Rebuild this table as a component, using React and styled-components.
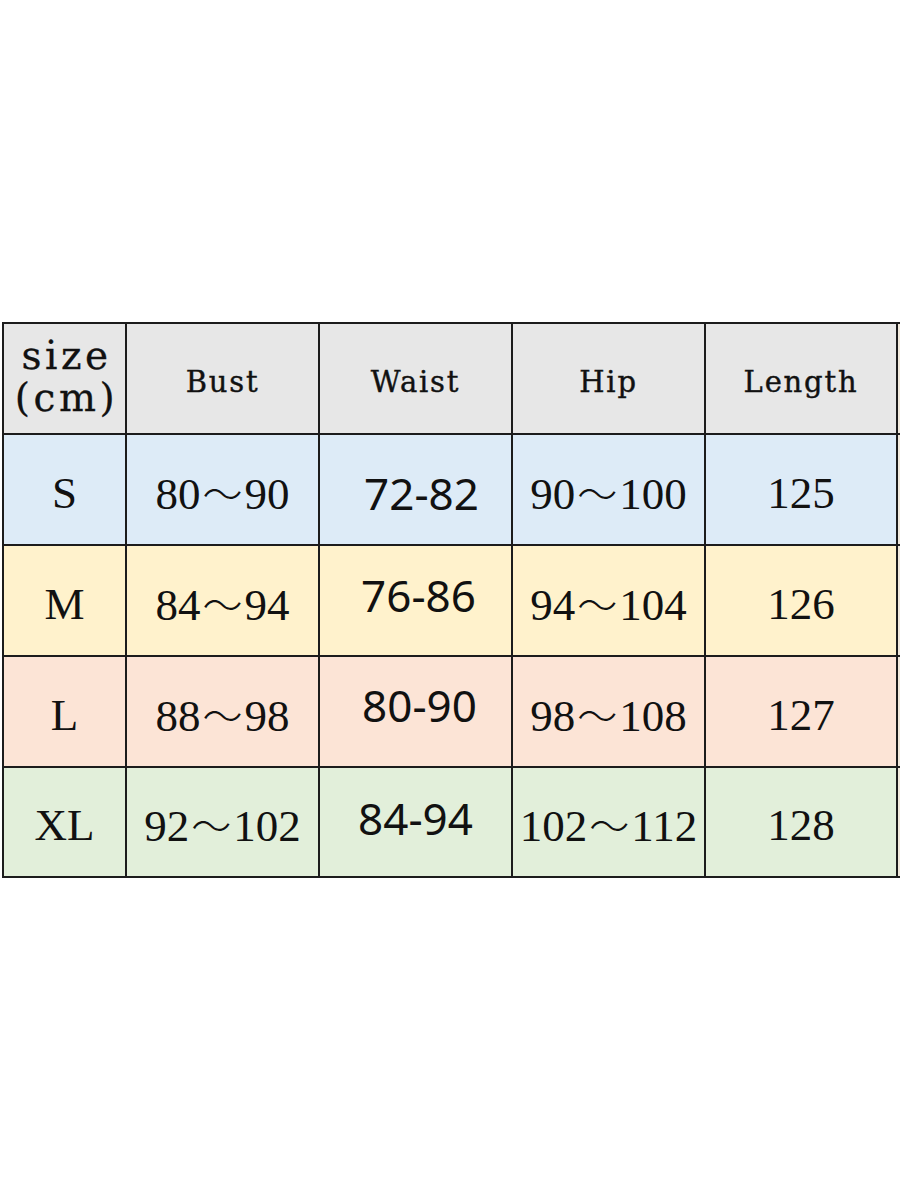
import styled, { createGlobalStyle } from "styled-components";

const GlobalStyle = createGlobalStyle`
  html, body {
    margin: 0;
    padding: 0;
    background: #ffffff;
    overflow: hidden;
  }
`;

const ROW_COLORS = {
  head: "#e7e7e7",
  S: "#ddebf7",
  M: "#fff2cc",
  L: "#fce4d6",
  XL: "#e2efda",
};

const ROWS = [
  { size: "S", bust: ["80", "90"], waist: "72-82", hip: ["90", "100"], length: "125", shift: [6, 3] },
  { size: "M", bust: ["84", "94"], waist: "76-86", hip: ["94", "104"], length: "126", shift: [3, -6] },
  { size: "L", bust: ["88", "98"], waist: "80-90", hip: ["98", "108"], length: "127", shift: [4, -7] },
  { size: "XL", bust: ["92", "102"], waist: "84-94", hip: ["102", "112"], length: "128", shift: [0, -4] },
];

const Page = styled.div`
  width: 900px;
  height: 1200px;
  padding-top: 322px;
  padding-left: 2px;
  box-sizing: border-box;
`;

const Table = styled.div`
  display: grid;
  grid-template-columns: 121px 191px 191px 191px 190px 2px;
  grid-template-rows: 109px 109px 109px 109px 108px;
  gap: 2px;
  padding: 2px;
  width: max-content;
  background: #1c1c1c;
`;

const Cell = styled.div`
  display: flex;
  align-items: center;
  justify-content: center;
  background: ${({ $tone }) => ROW_COLORS[$tone]};
  color: #111;
  overflow: hidden;
`;

const Edge = styled.div`
  background: #f1e9dc;
`;

const HeadText = styled.span`
  font-family: "DejaVu Serif", serif;
  font-size: 29px;
  letter-spacing: 1.8px;
  line-height: 34px;
  -webkit-text-stroke: 0.4px #111;
  transform: translateY(3px);
`;

const SizeHead = styled.span`
  font-family: "DejaVu Serif", serif;
  font-size: 39px;
  line-height: 42px;
  letter-spacing: 3.5px;
  text-align: center;
  -webkit-text-stroke: 0.3px #111;
  transform: translate(2px, -2px);
`;

const SerifText = styled.span`
  font-family: "Liberation Serif", serif;
  font-size: 45px;
  line-height: 50px;
  white-space: nowrap;
  transform: translateY(3px);
`;

const Tilde = styled.span`
  font-family: "Noto Sans CJK JP", "Noto Sans CJK SC", sans-serif;
  font-weight: 300;
  font-size: 40px;
  margin: 0 2px;
`;

const SansText = styled.span`
  font-family: "Noto Sans", "Open Sans", sans-serif;
  font-size: 44px;
  line-height: 50px;
  white-space: nowrap;
  transform: translate(${({ $dx }) => $dx}px, ${({ $dy }) => $dy}px);
`;

const Range = ({ values }) => (
  <SerifText>
    {values[0]}
    <Tilde>～</Tilde>
    {values[1]}
  </SerifText>
);

export default function App() {
  return (
    <>
      <GlobalStyle />
      <Page>
        <Table>
          <Cell $tone="head">
            <SizeHead>
              size
              <br />
              (cm)
            </SizeHead>
          </Cell>
          {["Bust", "Waist", "Hip", "Length"].map((h) => (
            <Cell key={h} $tone="head">
              <HeadText>{h}</HeadText>
            </Cell>
          ))}
          <Edge />
          {ROWS.map((r) => [
            <Cell key={r.size + "s"} $tone={r.size}>
              <SerifText>{r.size}</SerifText>
            </Cell>,
            <Cell key={r.size + "b"} $tone={r.size}>
              <Range values={r.bust} />
            </Cell>,
            <Cell key={r.size + "w"} $tone={r.size}>
              <SansText $dx={r.shift[0]} $dy={r.shift[1]}>
                {r.waist}
              </SansText>
            </Cell>,
            <Cell key={r.size + "h"} $tone={r.size}>
              <Range values={r.hip} />
            </Cell>,
            <Cell key={r.size + "l"} $tone={r.size}>
              <SerifText>{r.length}</SerifText>
            </Cell>,
            <Edge key={r.size + "e"} />,
          ])}
        </Table>
      </Page>
    </>
  );
}
